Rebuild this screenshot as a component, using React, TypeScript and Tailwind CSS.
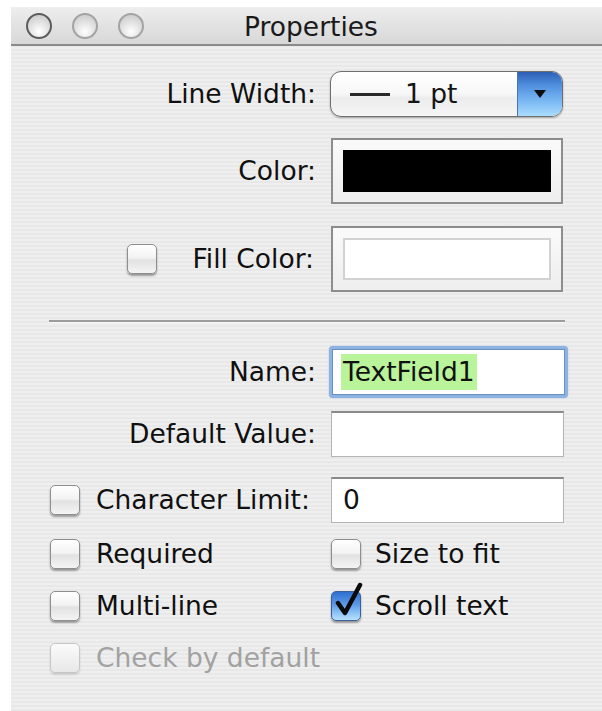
import React from "react";

const FONT = { fontFamily: '"DejaVu Sans", "Liberation Sans", sans-serif' };

function TrafficLight({ active }: { active?: boolean }) {
  return (
    <div
      className={
        "w-[26px] h-[26px] rounded-full border-[2px] bg-[radial-gradient(circle_at_50%_75%,#ffffff_0%,#e4e4e4_45%,#c4c4c4_100%)] " +
        (active ? "border-[#5c5c5c]" : "border-[#a3a3a3]")
      }
    />
  );
}

function Checkbox({ checked, disabled }: { checked?: boolean; disabled?: boolean }) {
  if (checked) {
    return (
      <div className="relative w-[30px] h-[30px] shrink-0">
        <div className="w-[30px] h-[30px] rounded-[5px] border border-[#3a5f9a] bg-[linear-gradient(180deg,#2f6fcf_0%,#5c9ae8_45%,#8cc3f6_75%,#b9e0ff_100%)] shadow-[0_2px_2px_rgba(0,0,0,0.35)]" />
        <svg
          className="absolute left-[2px] top-[-9px]"
          width="32"
          height="36"
          viewBox="0 0 32 36"
        >
          <path
            d="M5 21 L12 31 L27 3"
            fill="none"
            stroke="#0a0a0a"
            strokeWidth="4.5"
            strokeLinecap="round"
            strokeLinejoin="round"
          />
        </svg>
      </div>
    );
  }
  return (
    <div
      className={
        "w-[30px] h-[30px] shrink-0 rounded-[5px] border " +
        (disabled
          ? "border-[#c6c6c6] bg-[linear-gradient(180deg,#fbfbfb_0%,#f1f1f1_50%,#e8e8e8_100%)] shadow-[0_2px_2px_rgba(0,0,0,0.12)]"
          : "border-[#8e8e8e] bg-[linear-gradient(180deg,#ffffff_0%,#f3f3f3_45%,#e2e2e2_55%,#f4f4f4_100%)] shadow-[0_2px_2px_rgba(0,0,0,0.35)]")
      }
    />
  );
}

function TextField({ children }: { children?: React.ReactNode }) {
  return (
    <div className="w-[233px] h-[46px] bg-white border border-[#b4b4b4] border-t-[2px] border-t-[#8a8a8a] flex items-center pl-[11px] text-[#111]">
      {children}
    </div>
  );
}

function Label({ children, className = "" }: { children: React.ReactNode; className?: string }) {
  return (
    <div className={"w-[305px] flex justify-end items-center text-[#101010] " + className}>
      {children}
    </div>
  );
}

export default function App() {
  return (
    <div
      className="w-[602px] h-[711px] bg-white pl-[11px] pt-[7px] overflow-hidden text-[26.5px] leading-none"
      style={FONT}
    >
      <div className="w-[591px] h-[704px] flex flex-col bg-[repeating-linear-gradient(180deg,#efefef_0px,#efefef_2px,#e8e8e8_2px,#e8e8e8_4px)]">
        {/* title bar */}
        <div className="relative h-[39px] shrink-0 flex items-center bg-[linear-gradient(180deg,#eeeeee_0%,#e2e2e2_50%,#d8d8d8_100%)] border-b-[2px] border-b-[#8a8a8a]">
          <div className="flex items-center gap-[20px] pl-[15px]">
            <TrafficLight active />
            <TrafficLight />
            <TrafficLight />
          </div>
          <div className="absolute left-[233px] top-[7px] text-[#1a1a1a]">Properties</div>
        </div>

        {/* line width */}
        <div className="flex items-center mt-[25px] h-[46px]">
          <Label>Line Width:</Label>
          <div className="ml-[14px] w-[233px] h-[46px] rounded-[11px] border border-[#6f6f6f] overflow-hidden flex bg-[linear-gradient(180deg,#ffffff_0%,#f7f7f7_50%,#ececec_60%,#f6f6f6_100%)] shadow-[0_1px_2px_rgba(0,0,0,0.3)]">
            <div className="flex-1 flex items-center pl-[19px]">
              <span className="inline-block w-[40px] h-[3px] bg-[#2a2a2a]" />
              <span className="ml-[15px] text-[#151515]">1 pt</span>
            </div>
            <div className="w-[45px] border-l border-[#4a74b4] flex items-center justify-center bg-[linear-gradient(180deg,#2d5fb4_0%,#4f8fdf_30%,#79b7f2_65%,#a9dcff_100%)]">
              <svg width="14" height="10" viewBox="0 0 14 10">
                <path d="M1 1 L13 1 L7 9 Z" fill="#0d0d0d" />
              </svg>
            </div>
          </div>
        </div>

        {/* color */}
        <div className="flex items-center mt-[21px] h-[66px]">
          <Label>Color:</Label>
          <div className="ml-[15px] w-[232px] h-[66px] border-[2px] border-[#8d8d8d] bg-[linear-gradient(180deg,#fafafa,#eeeeee)] p-[10px]">
            <div className="w-full h-full bg-black" />
          </div>
        </div>

        {/* fill color */}
        <div className="flex items-center mt-[22px] h-[66px]">
          <div className="w-[305px] flex items-center pl-[116px] text-[#101010]">
            <Checkbox />
            <span className="flex-1 text-right pr-[2px]">Fill Color:</span>
          </div>
          <div className="ml-[15px] w-[232px] h-[66px] border-[2px] border-[#8d8d8d] bg-[linear-gradient(180deg,#fafafa,#eeeeee)] p-[10px]">
            <div className="w-full h-full bg-white border-[2px] border-[#d2d2d2]" />
          </div>
        </div>

        {/* separator */}
        <div className="mt-[28px] ml-[38px] w-[516px] h-[2px] bg-[#9c9c9c] border-b border-b-[#f6f6f6] box-content" />

        {/* name */}
        <div className="flex items-center mt-[23px] h-[52px]">
          <Label>Name:</Label>
          <div className="ml-[13px] rounded-[4px] p-[3px] bg-[#8eb2e2] shadow-[0_0_2px_#a9c6ec]">
            <div className="w-[233px] h-[46px] bg-white border border-[#6d8fc0] flex items-center pl-[8px]">
              <span className="bg-[#b9f39a] text-[#111] h-[36px] flex items-center pl-[2px] pr-[2px]">
                TextField1
              </span>
            </div>
          </div>
        </div>

        {/* default value */}
        <div className="flex items-center mt-[13px] h-[46px]">
          <Label>Default Value:</Label>
          <div className="ml-[15px]">
            <TextField />
          </div>
        </div>

        {/* character limit */}
        <div className="flex items-center mt-[20px] h-[46px]">
          <div className="w-[305px] flex items-center pl-[39px] text-[#101010]">
            <Checkbox />
            <span className="ml-[16px]">Character Limit:</span>
          </div>
          <div className="ml-[15px]">
            <TextField>0</TextField>
          </div>
        </div>

        {/* option checkboxes */}
        <div className="mt-[16px] grid grid-cols-[281px_1fr] pl-[39px] gap-y-[22px] text-[#101010]">
          <div className="flex items-center h-[30px]">
            <Checkbox />
            <span className="ml-[16px]">Required</span>
          </div>
          <div className="flex items-center h-[30px]">
            <Checkbox />
            <span className="ml-[14px]">Size to fit</span>
          </div>
          <div className="flex items-center h-[30px]">
            <Checkbox />
            <span className="ml-[16px]">Multi-line</span>
          </div>
          <div className="flex items-center h-[30px]">
            <Checkbox checked />
            <span className="ml-[14px]">Scroll text</span>
          </div>
          <div className="flex items-center h-[30px] col-span-2">
            <Checkbox disabled />
            <span className="ml-[16px] text-[#a2a2a2]">Check by default</span>
          </div>
        </div>
      </div>
    </div>
  );
}
